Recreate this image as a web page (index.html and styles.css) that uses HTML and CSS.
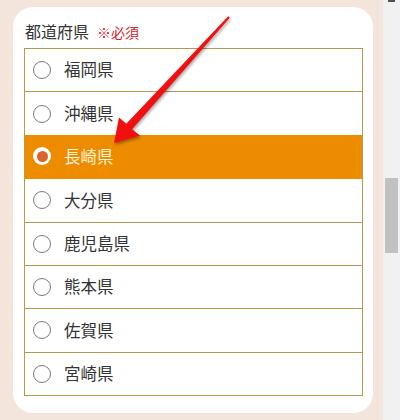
FILE: index.html
```html
<!DOCTYPE html>
<html lang="ja">
<head>
<meta charset="utf-8">
<title>都道府県</title>
<link rel="stylesheet" href="styles.css">
</head>
<body>
<div class="page">
  <main class="content">
    <section class="card">
      <h2 class="label">都道府県<span class="req">※必須</span></h2>
      <ul class="options">
        <li class="option"><span class="radio"></span><span class="name">福岡県</span></li>
        <li class="option"><span class="radio"></span><span class="name">沖縄県</span></li>
        <li class="option selected"><span class="radio"></span><span class="name">長崎県</span></li>
        <li class="option"><span class="radio"></span><span class="name">大分県</span></li>
        <li class="option"><span class="radio"></span><span class="name">鹿児島県</span></li>
        <li class="option"><span class="radio"></span><span class="name">熊本県</span></li>
        <li class="option"><span class="radio"></span><span class="name">佐賀県</span></li>
        <li class="option"><span class="radio"></span><span class="name">宮崎県</span></li>
      </ul>
    </section>
  </main>
  <div class="scrollbar">
    <div class="scroll-arrow"></div>
    <div class="thumb"></div>
  </div>
  <svg class="arrow" width="400" height="420" viewBox="0 0 400 420" aria-hidden="true">
    <polygon points="114,143 119,117.5 126.3,123.8 228.2,16.3 229.8,17.7 132.1,129.2 140,135.5" />
  </svg>
</div>
</body>
</html>
```

FILE: styles.css
```css
* { box-sizing: border-box; }
html, body {
  margin: 0;
  padding: 0;
  overflow: hidden;
}
body {
  background: #f3e5dc;
  font-family: "Noto Sans CJK JP", "Noto Sans", sans-serif;
  color: #333;
}
.page {
  position: relative;
  display: flex;
  width: 400px;
  height: 420px;
}
.content {
  flex: 1;
  padding: 7px 10px 7px 13px;
}
.card {
  background: #fff;
  border-radius: 20px;
  width: 360px;
  height: 406px;
  padding: 12px 10px 19px 11px;
}
.label {
  margin: 0 0 4px 1px;
  font-size: 16px;
  font-weight: normal;
  line-height: 24px;
  color: #333;
  display: flex;
  align-items: baseline;
  gap: 8px;
}
.req {
  font-size: 14px;
  color: #d3242b;
}
.options {
  list-style: none;
  margin: 0;
  padding: 0;
  border: 1px solid #b39a4d;
  border-bottom: none;
  width: 339px;
}
.option {
  display: flex;
  align-items: center;
  gap: 13px;
  height: 43.375px;
  padding-left: 8px;
  border-bottom: 1px solid #b39a4d;
  font-size: 16.5px;
  color: #333;
  background: #fff;
}
.radio {
  width: 18px;
  height: 18px;
  border-radius: 50%;
  border: 1px solid #7a7a7a;
  background: #fff;
  flex: none;
  display: flex;
  align-items: center;
  justify-content: center;
}
.name {
  line-height: 1;
  padding-bottom: 1px;
}
.option.selected {
  background: #ee8c00;
  color: #fff3d6;
  border-bottom-color: #ee8c00;
  margin-top: -1px;
  height: 44.375px;
}
.option.selected .radio {
  border: none;
  background: #fff;
}
.option.selected .radio::after {
  content: "";
  width: 11px;
  height: 11px;
  border-radius: 50%;
  background: #d9652c;
}
.scrollbar {
  width: 17px;
  background: #f1f1f1;
  flex: none;
}
.scroll-arrow {
  width: 7px;
  height: 2px;
  margin-left: 5px;
  background: #505050;
}
.thumb {
  margin: 176px 2px 0 2px;
  height: 75px;
  background: #c1c1c1;
}
.arrow {
  position: absolute;
  left: 0;
  top: 0;
  pointer-events: none;
  filter: drop-shadow(1px 2px 1.5px rgba(0, 0, 0, 0.35));
}
.arrow polygon {
  fill: #f20f0f;
}
```
